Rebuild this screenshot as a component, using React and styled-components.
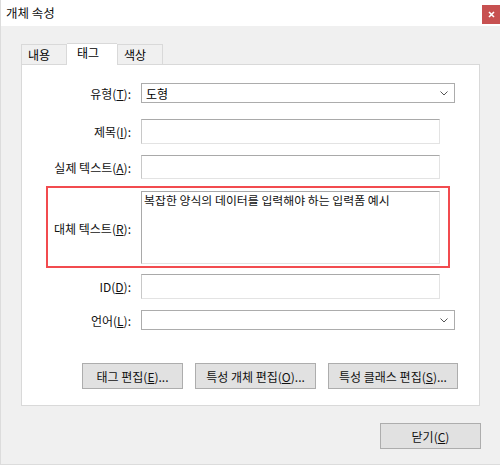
import React from "react";
import styled, { createGlobalStyle } from "styled-components";

const GlobalStyle = createGlobalStyle`
  html, body {
    margin: 0;
    padding: 0;
    background: #ffffff;
  }
  body {
    font-family: "Noto Sans CJK KR", "Noto Sans", sans-serif;
    font-size: 12px;
    color: #000;
  }
`;

function App() {
  return (
    <>
      <GlobalStyle />
      <Window>
        <TitleBar>
          <Title>개체 속성</Title>
          <CloseButton aria-label="close">
            <svg width="7" height="7" viewBox="0 0 7 7">
              <path d="M1 1 L6 6 M6 1 L1 6" stroke="#fff" strokeWidth="1.6" />
            </svg>
          </CloseButton>
        </TitleBar>

        <Body>
          <Tabs>
            <Tab>내용</Tab>
            <Tab $active>태그</Tab>
            <Tab>색상</Tab>
          </Tabs>

          <Panel>
            <Row $top={18}>
              <Label>
                유형(<u>T</u>):
              </Label>
              <Select $width={314}>
                <span>도형</span>
                <Chevron />
              </Select>
            </Row>

            <Row $top={16}>
              <Label>
                제목(<u>I</u>):
              </Label>
              <TextBox $height={25} />
            </Row>

            <Row $top={11}>
              <Label>
                실제 텍스트(<u>A</u>):
              </Label>
              <TextBox $height={24} />
            </Row>

            <Highlight>
              <HighlightLabel>
                대체 텍스트(<u>R</u>):
              </HighlightLabel>
              <TextArea>복잡한 양식의 데이터를 입력해야 하는 입력폼 예시</TextArea>
            </Highlight>

            <Row $top={6}>
              <Label>
                ID(<u>D</u>):
              </Label>
              <TextBox $height={25} />
            </Row>

            <Row $top={11}>
              <Label>
                언어(<u>L</u>):
              </Label>
              <Select $width={314}>
                <span />
                <Chevron />
              </Select>
            </Row>

            <ButtonRow>
              <Button $width={101}>
                태그 편집(<u>E</u>)...
              </Button>
              <Button $width={121}>
                특성 개체 편집(<u>O</u>)...
              </Button>
              <Button $width={130}>
                특성 클래스 편집(<u>S</u>)...
              </Button>
            </ButtonRow>
          </Panel>

          <Footer>
            <Button $width={101}>
              닫기(<u>C</u>)
            </Button>
          </Footer>
        </Body>
      </Window>
    </>
  );
}

const Chevron = () => (
  <svg width="8" height="5" viewBox="0 0 8 5">
    <path d="M0.5 0.5 L4 4 L7.5 0.5" fill="none" stroke="#555" strokeWidth="1" />
  </svg>
);

export default App;

const Window = styled.div`
  width: 500px;
  height: 465px;
  box-sizing: border-box;
  background: #f0f0f0;
  border-left: 1px solid #dcdcdc;
  border-bottom: 1px solid #dcdcdc;
  display: flex;
  flex-direction: column;
`;

const TitleBar = styled.div`
  height: 26px;
  background: #ffffff;
  display: flex;
  align-items: flex-start;
  justify-content: space-between;
  padding-left: 5px;
`;

const Title = styled.div`
  font-size: 12.5px;
  line-height: 26px;
  color: #111;
`;

const CloseButton = styled.div`
  width: 18px;
  height: 19px;
  margin-top: 5px;
  background: #c75050;
  display: flex;
  align-items: center;
  justify-content: center;
`;

const Body = styled.div`
  padding: 17px 0 0 20px;
`;

const Tabs = styled.div`
  display: flex;
  align-items: flex-end;
  height: 21px;
`;

const Tab = styled.div`
  box-sizing: border-box;
  height: ${(p) => (p.$active ? "22px" : "20px")};
  width: ${(p) => (p.$active ? "50px" : "46px")};
  margin-bottom: ${(p) => (p.$active ? "-1px" : "0")};
  background: ${(p) => (p.$active ? "#ffffff" : "#f0f0f0")};
  border: 1px solid #d9d9d9;
  border-bottom: none;
  border-left: ${(p) => (p.$active ? "none" : "1px solid #d9d9d9")};
  border-right: ${(p) => (p.$active ? "none" : "1px solid #d9d9d9")};
  padding: ${(p) => (p.$active ? "2px 0 0 10px" : "3px 0 0 6px")};
  font-size: 12px;
  line-height: 14px;
  position: relative;
  z-index: ${(p) => (p.$active ? 1 : 0)};
`;

const Panel = styled.div`
  box-sizing: border-box;
  width: 459px;
  height: 342px;
  background: #ffffff;
  border: 1px solid #d9d9d9;
  display: flex;
  flex-direction: column;
`;

const Row = styled.div`
  display: flex;
  align-items: center;
  gap: 10px;
  margin-top: ${(p) => p.$top}px;
`;

const Label = styled.div`
  width: 109px;
  text-align: right;
  font-size: 12px;
  color: #111;

  u {
    text-decoration-thickness: 1px;
    text-underline-offset: 1px;
  }
`;

const Select = styled.div`
  box-sizing: border-box;
  width: ${(p) => p.$width}px;
  height: 20px;
  border: 1px solid #acacac;
  background: #ffffff;
  display: flex;
  align-items: center;
  justify-content: space-between;
  padding: 0 6px 0 4px;
  font-size: 12px;
`;

const TextBox = styled.div`
  box-sizing: border-box;
  width: 299px;
  height: ${(p) => p.$height}px;
  background: #ffffff;
  border: 1px solid #e3e3e3;
  border-top-color: #a9a9a9;
  border-left-color: #c8c8c8;
`;

const Highlight = styled.div`
  box-sizing: border-box;
  margin: 7px 0 0 24px;
  width: 404px;
  height: 82px;
  border: 2px solid #f24b4f;
  display: flex;
  align-items: flex-start;
  gap: 10px;
  padding-top: 3px;
`;

const HighlightLabel = styled(Label)`
  width: 83px;
  align-self: center;
`;

const TextArea = styled.div`
  box-sizing: border-box;
  width: 299px;
  height: 73px;
  background: #ffffff;
  border: 1px solid #e3e3e3;
  border-top-color: #a9a9a9;
  border-left-color: #a9a9a9;
  padding: 0 2px;
  font-size: 11.9px;
  line-height: 15px;
  color: #111;
`;

const ButtonRow = styled.div`
  display: flex;
  gap: 12px;
  margin: 33px 0 0 60px;
`;

const Button = styled.div`
  box-sizing: border-box;
  width: ${(p) => p.$width}px;
  height: 26px;
  background: #e1e1e1;
  border: 1px solid #adadad;
  display: flex;
  align-items: center;
  justify-content: center;
  font-size: 12px;
  color: #111;

  u {
    text-decoration-thickness: 1px;
    text-underline-offset: 1px;
  }
`;

const Footer = styled.div`
  display: flex;
  justify-content: flex-end;
  padding: 17px 19px 0 0;
`;
